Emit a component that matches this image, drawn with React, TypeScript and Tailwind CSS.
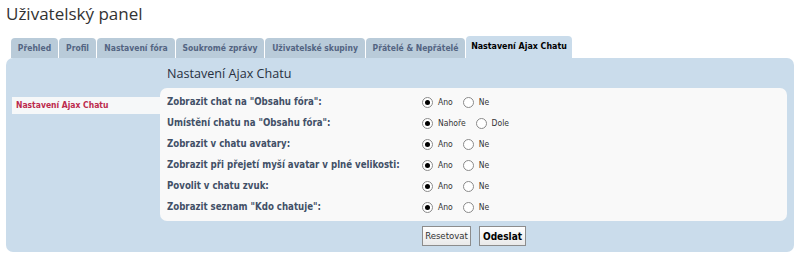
import React from "react";

// záložky uživatelského panelu
const TABS = [
  { label: "Přehled", w: "w-[47px]" },
  { label: "Profil", w: "w-[37px]" },
  { label: "Nastavení fóra", w: "w-[78px]" },
  { label: "Soukromé zprávy", w: "w-[88px]" },
  { label: "Uživatelské skupiny", w: "w-[100px]" },
  { label: "Přátelé & Nepřátelé", w: "w-[99px]" },
];

const OPTIONS = [
  { label: "Zobrazit chat na \"Obsahu fóra\":", yes: "Ano", no: "Ne" },
  { label: "Umístění chatu na \"Obsahu fóra\":", yes: "Nahoře", no: "Dole" },
  { label: "Zobrazit v chatu avatary:", yes: "Ano", no: "Ne" },
  { label: "Zobrazit při přejetí myší avatar v plné velikosti:", yes: "Ano", no: "Ne" },
  { label: "Povolit v chatu zvuk:", yes: "Ano", no: "Ne" },
  { label: "Zobrazit seznam \"Kdo chatuje\":", yes: "Ano", no: "Ne" },
];

const SMALL = "font-['DejaVu_Sans_Condensed','DejaVu_Sans',sans-serif]";

function Radio({ checked, label }: { checked: boolean; label: string }) {
  return (
    <label className="flex items-center gap-[5px]">
      <span className="flex h-[11px] w-[11px] items-center justify-center rounded-full border border-[#8a8a8a] bg-white">
        {checked && <span className="h-[5px] w-[5px] rounded-full bg-black" />}
      </span>
      <span className="text-[8.5px] text-[#333]">{label}</span>
    </label>
  );
}

export default function App() {
  return (
    <div className={`h-[258px] w-[800px] overflow-hidden bg-white px-[6px] ${SMALL}`}>
      <h2 className="pt-[2px] font-['Open_Sans',sans-serif] text-[17px] leading-[24px] text-[#333]">
        Uživatelský panel
      </h2>

      {/* záložky */}
      <div className="mt-[10px] flex h-[22px] items-end gap-[1px] pl-[5px]">
        {TABS.map((tab) => (
          <div
            key={tab.label}
            className={`${tab.w} flex h-[20px] items-center justify-center rounded-t-[4px] bg-[#b9cbd9] text-[8.5px] font-bold text-[#536482]`}
          >
            {tab.label}
          </div>
        ))}
        <div className="flex h-[22px] w-[106px] items-center justify-center rounded-t-[4px] bg-[#cadceb] text-[8.8px] font-bold text-black">
          Nastavení Ajax Chatu
        </div>
      </div>

      {/* panel */}
      <div className="flex h-[194px] rounded-[7px] bg-[#cadceb] pl-[6px] pr-[7px]">
        <div className="w-[148px] pt-[39px]">
          <div className="flex h-[17px] items-center bg-[#f6f8f9] pl-[4px] text-[8.5px] font-bold text-[#bc2a4d]">
            Nastavení Ajax Chatu
          </div>
        </div>

        <div className="flex flex-1 flex-col">
          <h3 className="flex h-[30px] items-center pl-[7px] pt-[2px] font-['Open_Sans',sans-serif] text-[12.6px] text-[#28313f]">
            Nastavení Ajax Chatu
          </h3>
          <div className="rounded-[7px] bg-[#f9f9f9] pb-[3px] pt-[4px]">
            {OPTIONS.map((opt) => (
              <div key={opt.label} className="flex h-[21px] items-center">
                <div className="w-[262px] pl-[7px] text-[9.6px] font-bold text-[#425067]">{opt.label}</div>
                <div className="flex items-center gap-[10px]">
                  <Radio checked label={opt.yes} />
                  <Radio checked={false} label={opt.no} />
                </div>
              </div>
            ))}
          </div>
          <div className="flex gap-[8px] pl-[262px] pt-[5px]">
            <button className="h-[20px] w-[49px] border border-[#8c8c8c] bg-gradient-to-b from-white to-[#e9e9e9] text-[9.5px] text-[#333]">
              Resetovat
            </button>
            <button className="h-[20px] w-[47px] border border-[#8c8c8c] bg-gradient-to-b from-white to-[#e9e9e9] text-[10px] font-bold text-black">
              Odeslat
            </button>
          </div>
        </div>
      </div>
    </div>
  );
}
